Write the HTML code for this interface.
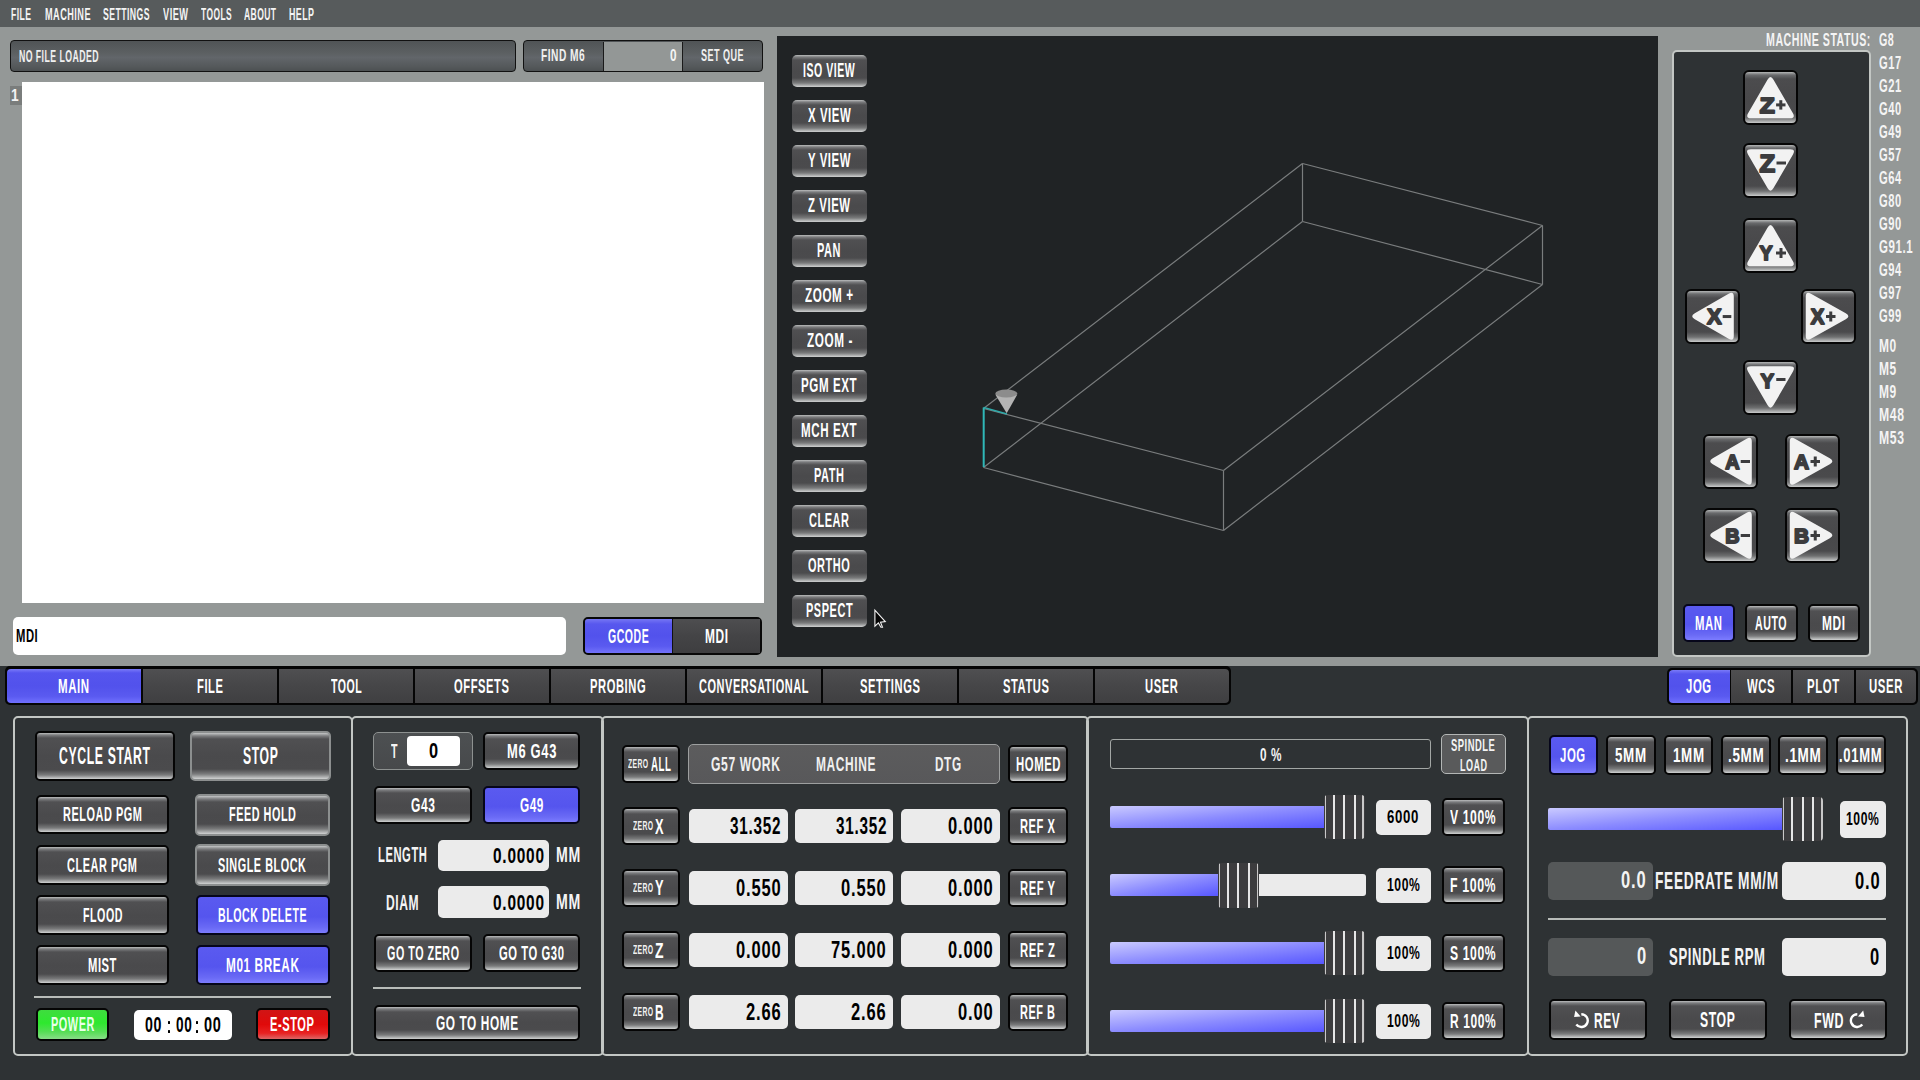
<!DOCTYPE html><html><head><meta charset="utf-8"><title>Probe Basic</title><style>
*{margin:0;padding:0;box-sizing:border-box}
html,body{width:1920px;height:1080px;overflow:hidden;background:#949897;font-family:"Liberation Sans",sans-serif;font-weight:bold;}
div{position:absolute}
.tw{display:inline-block;position:relative;line-height:1;font-size:0;white-space:nowrap;vertical-align:top}
.t{display:inline-block;line-height:1;white-space:nowrap;color:#fff;transform-origin:0 0}
.tx{line-height:0;white-space:nowrap}
.b,.bg,.bb,.gr,.rd,.tab,.tabb{display:flex;align-items:center;justify-content:center;border-radius:5px;}
.b{border:2px solid #050505;background:linear-gradient(#bcbebe 0,#7c7d7f 2px,#505052 5px,#4a4a4c 50%,#4b4b4d calc(100% - 9px),#7a7b7c calc(100% - 4px),#d0d2d2 100%);}
.bg{border:2px solid #8c8f8f;background:linear-gradient(#c4c6c6 0,#7c7d7f 3px,#505052 6px,#4a4a4c 50%,#4b4b4d calc(100% - 10px),#7a7b7c calc(100% - 5px),#d0d2d2 100%);}
.bb{border:2px solid #06061a;background:linear-gradient(#5a5af0 0,#5555ee 55%,#6a6af5 85%,#7c7cff 100%);}
.gr{border:2px solid #050505;background:linear-gradient(#3fdc3f 0,#2ee82e 45%,#55dd55 75%,#88dd88 100%);}
.rd{border:2px solid #050505;background:linear-gradient(#d01515 0,#e00a0a 50%,#e82222 80%,#dd6666 100%);}
.pn{border:2px solid #c3c7c4;border-radius:5px;}
.inp{background:#ebebeb;border-radius:5px;display:flex;align-items:center;justify-content:flex-end;padding-top:1.5px;}
.inp .t{color:#000}
.jb{border:2px solid #050505;border-radius:6px;background:linear-gradient(#b4b6b6 0,#6a6b6d 3px,#4c4c4e 7px,#48484a 55%,#4a4a4c calc(100% - 10px),#6f7071 calc(100% - 5px),#c9cbcb 100%);}
</style></head><body>
<div class="" style="left:0px;top:0px;width:1920px;height:27px;background:#575b5c;"></div>
<div class="tx" style="left:10.5px;top:5.65px;"><span class="tw" style="width:20.5px;height:16.35px"><span class="t" style="font-size:16.35px;transform:scaleX(0.5298);letter-spacing:0.82px;color:#f4f4f4;">FILE</span></span></div>
<div class="tx" style="left:44.5px;top:5.65px;"><span class="tw" style="width:46px;height:16.35px"><span class="t" style="font-size:16.35px;transform:scaleX(0.5608);letter-spacing:0.82px;color:#f4f4f4;">MACHINE</span></span></div>
<div class="tx" style="left:103px;top:5.65px;"><span class="tw" style="width:47px;height:16.35px"><span class="t" style="font-size:16.35px;transform:scaleX(0.5322);letter-spacing:0.82px;color:#f4f4f4;">SETTINGS</span></span></div>
<div class="tx" style="left:162.5px;top:5.65px;"><span class="tw" style="width:25.5px;height:16.35px"><span class="t" style="font-size:16.35px;transform:scaleX(0.5659);letter-spacing:0.82px;color:#f4f4f4;">VIEW</span></span></div>
<div class="tx" style="left:201px;top:5.65px;"><span class="tw" style="width:31px;height:16.35px"><span class="t" style="font-size:16.35px;transform:scaleX(0.5157);letter-spacing:0.82px;color:#f4f4f4;">TOOLS</span></span></div>
<div class="tx" style="left:244px;top:5.65px;"><span class="tw" style="width:32.5px;height:16.35px"><span class="t" style="font-size:16.35px;transform:scaleX(0.5223);letter-spacing:0.82px;color:#f4f4f4;">ABOUT</span></span></div>
<div class="tx" style="left:289px;top:5.65px;"><span class="tw" style="width:25.5px;height:16.35px"><span class="t" style="font-size:16.35px;transform:scaleX(0.5439);letter-spacing:0.82px;color:#f4f4f4;">HELP</span></span></div>
<div class="" style="left:10px;top:40px;width:506px;height:32px;border:1.5px solid #111;border-radius:4px;background:linear-gradient(#505456 0,#5c6062 40%,#62666a 55%,#55595b 85%,#4c5052 100%);"></div>
<div class="tx" style="left:19.4px;top:48.04px;"><span class="tw" style="width:80px;height:16.13px"><span class="t" style="font-size:16.13px;transform:scaleX(0.5423);letter-spacing:0.81px;color:#f0f0f0;">NO FILE LOADED</span></span></div>
<div class="" style="left:523px;top:40px;width:240px;height:32px;border:1.5px solid #111;border-radius:4px;background:linear-gradient(#505456 0,#5c6062 40%,#62666a 55%,#55595b 85%,#4c5052 100%);overflow:hidden;"></div>
<div class="" style="left:602.5px;top:41.5px;width:80.5px;height:29px;background:#939796;border-left:1.5px solid #1a1a1a;border-right:1.5px solid #1a1a1a;"></div>
<div class="tx" style="left:62.9px;top:48.37px;width:1000px;text-align:center;"><span class="tw" style="width:44.25px;height:16.57px"><span class="t" style="font-size:16.57px;transform:scaleX(0.6139);letter-spacing:0.83px;color:#f0f0f0;">FIND M6</span></span></div>
<div class="tx" style="left:222.6px;top:48.37px;width:1000px;text-align:center;"><span class="tw" style="width:43px;height:16.57px"><span class="t" style="font-size:16.57px;transform:scaleX(0.5475);letter-spacing:0.83px;color:#f0f0f0;">SET QUE</span></span></div>
<div class="tx" style="left:-323.25px;top:47.77px;width:1000px;text-align:right;"><span class="tw" style="width:7.13px;height:16.57px"><span class="t" style="font-size:16.57px;transform:scaleX(0.7100);letter-spacing:0.83px;color:#f4f4f4;">0</span></span></div>
<div class="" style="left:22px;top:82px;width:742px;height:521px;background:#ffffff;"></div>
<div class="" style="left:10px;top:86px;width:12px;height:18.5px;background:#7a7d7c;"></div>
<div class="tx" style="left:-485.2px;top:86.58px;width:1000px;text-align:center;"><span class="tw" style="width:8.32px;height:17.15px"><span class="t" style="font-size:17.15px;transform:scaleX(0.8000);letter-spacing:0.86px;color:#f4f4f4;">1</span></span></div>
<div class="" style="left:13px;top:617px;width:553px;height:38px;background:#fff;border-radius:5px;"></div>
<div class="tx" style="left:16.25px;top:627px;"><span class="tw" style="width:22.32px;height:18.9px"><span class="t" style="font-size:18.9px;transform:scaleX(0.5956);letter-spacing:0.94px;color:#000;">MDI</span></span></div>
<div class="" style="left:582.5px;top:616.8px;width:179.5px;height:38.2px;border:2px solid #080808;border-radius:5px;background:#454547;overflow:hidden;"></div>
<div class="" style="left:584.5px;top:618.8px;width:87.25px;height:34.2px;display:flex;align-items:center;justify-content:center;border-radius:3px 0 0 3px;background:linear-gradient(#7676f4 0,#5858ee 5px,#5252ec 50%,#5a5af0 80%,#7272fa 100%);"><span class="tw" style="width:41.25px;height:19.99px"><span class="t" style="font-size:19.99px;transform:scaleX(0.5269);letter-spacing:1px;">GCODE</span></span></div>
<div class="" style="left:671.75px;top:618.8px;width:88.25px;height:34.2px;display:flex;align-items:center;justify-content:center;border-left:1.5px solid #111;background:linear-gradient(#4e4e50,#444446 50%,#3e3e40);"><span class="tw" style="width:23.61px;height:19.99px"><span class="t" style="font-size:19.99px;transform:scaleX(0.5956);letter-spacing:1px;">MDI</span></span></div>
<div class="" style="left:777px;top:36px;width:881px;height:621px;background:#202325;"></div>
<div class="b" style="left:792px;top:54.5px;width:75px;height:32px;border:none;border-radius:5px;"><span class="tw" style="width:52.3px;height:19.62px"><span class="t" style="font-size:19.62px;transform:scaleX(0.5378);letter-spacing:0.98px;">ISO VIEW</span></span></div>
<div class="b" style="left:792px;top:99.5px;width:75px;height:32px;border:none;border-radius:5px;"><span class="tw" style="width:43.31px;height:19.62px"><span class="t" style="font-size:19.62px;transform:scaleX(0.5807);letter-spacing:0.98px;">X VIEW</span></span></div>
<div class="b" style="left:792px;top:144.5px;width:75px;height:32px;border:none;border-radius:5px;"><span class="tw" style="width:43.1px;height:19.62px"><span class="t" style="font-size:19.62px;transform:scaleX(0.5807);letter-spacing:0.98px;">Y VIEW</span></span></div>
<div class="b" style="left:792px;top:189.5px;width:75px;height:32px;border:none;border-radius:5px;"><span class="tw" style="width:42.69px;height:19.62px"><span class="t" style="font-size:19.62px;transform:scaleX(0.5810);letter-spacing:0.98px;">Z VIEW</span></span></div>
<div class="b" style="left:792px;top:234.5px;width:75px;height:32px;border:none;border-radius:5px;"><span class="tw" style="width:24.03px;height:19.62px"><span class="t" style="font-size:19.62px;transform:scaleX(0.5600);letter-spacing:0.98px;">PAN</span></span></div>
<div class="b" style="left:792px;top:279.5px;width:75px;height:32px;border:none;border-radius:5px;"><span class="tw" style="width:48.66px;height:19.62px"><span class="t" style="font-size:19.62px;transform:scaleX(0.5959);letter-spacing:0.98px;">ZOOM +</span></span></div>
<div class="b" style="left:792px;top:324.5px;width:75px;height:32px;border:none;border-radius:5px;"><span class="tw" style="width:45.9px;height:19.62px"><span class="t" style="font-size:19.62px;transform:scaleX(0.5982);letter-spacing:0.98px;">ZOOM -</span></span></div>
<div class="b" style="left:792px;top:369.5px;width:75px;height:32px;border:none;border-radius:5px;"><span class="tw" style="width:56.23px;height:19.62px"><span class="t" style="font-size:19.62px;transform:scaleX(0.5908);letter-spacing:0.98px;">PGM EXT</span></span></div>
<div class="b" style="left:792px;top:414.5px;width:75px;height:32px;border:none;border-radius:5px;"><span class="tw" style="width:56.22px;height:19.62px"><span class="t" style="font-size:19.62px;transform:scaleX(0.5908);letter-spacing:0.98px;">MCH EXT</span></span></div>
<div class="b" style="left:792px;top:459.5px;width:75px;height:32px;border:none;border-radius:5px;"><span class="tw" style="width:30.48px;height:19.62px"><span class="t" style="font-size:19.62px;transform:scaleX(0.5600);letter-spacing:0.98px;">PATH</span></span></div>
<div class="b" style="left:792px;top:504.5px;width:75px;height:32px;border:none;border-radius:5px;"><span class="tw" style="width:40.59px;height:19.62px"><span class="t" style="font-size:19.62px;transform:scaleX(0.5600);letter-spacing:0.98px;">CLEAR</span></span></div>
<div class="b" style="left:792px;top:549.5px;width:75px;height:32px;border:none;border-radius:5px;"><span class="tw" style="width:42.42px;height:19.62px"><span class="t" style="font-size:19.62px;transform:scaleX(0.5600);letter-spacing:0.98px;">ORTHO</span></span></div>
<div class="b" style="left:792px;top:594.5px;width:75px;height:32px;border:none;border-radius:5px;"><span class="tw" style="width:47.26px;height:19.62px"><span class="t" style="font-size:19.62px;transform:scaleX(0.5600);letter-spacing:0.98px;">PSPECT</span></span></div>
<svg width="1920" height="1080" style="position:absolute;left:0;top:0"><line x1="1302.5" y1="163.5" x2="983.5" y2="408.5" stroke="#7a7d7e" stroke-width="1.2"/><line x1="1302.5" y1="163.5" x2="1542.5" y2="225.5" stroke="#7a7d7e" stroke-width="1.2"/><line x1="1302.5" y1="163.5" x2="1302.5" y2="221.5" stroke="#7a7d7e" stroke-width="1.2"/><line x1="1302.5" y1="221.5" x2="983.5" y2="467.5" stroke="#7a7d7e" stroke-width="1.2"/><line x1="1302.5" y1="221.5" x2="1542.5" y2="284.5" stroke="#7a7d7e" stroke-width="1.2"/><line x1="1542.5" y1="225.5" x2="1542.5" y2="284.5" stroke="#7a7d7e" stroke-width="1.2"/><line x1="1542.5" y1="225.5" x2="1223.5" y2="470.5" stroke="#7a7d7e" stroke-width="1.2"/><line x1="1542.5" y1="284.5" x2="1223.5" y2="530.5" stroke="#7a7d7e" stroke-width="1.2"/><line x1="983.5" y1="408.5" x2="1223.5" y2="470.5" stroke="#7a7d7e" stroke-width="1.2"/><line x1="983.5" y1="467.5" x2="1223.5" y2="530.5" stroke="#7a7d7e" stroke-width="1.2"/><line x1="1223.5" y1="470.5" x2="1223.5" y2="530.5" stroke="#7a7d7e" stroke-width="1.2"/><line x1="983.7" y1="407.5" x2="983.7" y2="467" stroke="#2fb7b7" stroke-width="2"/><line x1="983.7" y1="407.5" x2="1007" y2="414" stroke="#2fa9a9" stroke-width="1.5"/><path d="M995.3 394.4 L1006.7 413.3 L1017.3 394.4 Z" fill="#b4b4b4"/><ellipse cx="1006.3" cy="393.5" rx="11" ry="4" fill="#8c8c8c"/><path d="M874.9 610.2 L874.9 626.2 L878.4 622.9 L880.9 627.2 L882.5 627.2 L880.5 622.2 L885.3 621.6 Z" fill="#050505" stroke="#f4f4f4" stroke-width="1.1" stroke-linejoin="miter"/></svg>
<div class="tx" style="left:871px;top:31px;width:1000px;text-align:right;"><span class="tw" style="width:105px;height:18.9px"><span class="t" style="font-size:18.9px;transform:scaleX(0.5625);letter-spacing:0.94px;color:#f4f4f4;">MACHINE STATUS:</span></span></div>
<div class="tx" style="left:1878.75px;top:31px;"><span class="tw" style="width:15.37px;height:18.9px"><span class="t" style="font-size:18.9px;transform:scaleX(0.5673);letter-spacing:0.94px;color:#f4f4f4;">G8</span></span></div>
<div class="tx" style="left:1878.75px;top:54px;"><span class="tw" style="width:22.77px;height:18.9px"><span class="t" style="font-size:18.9px;transform:scaleX(0.5907);letter-spacing:0.94px;color:#f4f4f4;">G17</span></span></div>
<div class="tx" style="left:1878.75px;top:77px;"><span class="tw" style="width:22.77px;height:18.9px"><span class="t" style="font-size:18.9px;transform:scaleX(0.5907);letter-spacing:0.94px;color:#f4f4f4;">G21</span></span></div>
<div class="tx" style="left:1878.75px;top:100px;"><span class="tw" style="width:22.77px;height:18.9px"><span class="t" style="font-size:18.9px;transform:scaleX(0.5907);letter-spacing:0.94px;color:#f4f4f4;">G40</span></span></div>
<div class="tx" style="left:1878.75px;top:123px;"><span class="tw" style="width:22.77px;height:18.9px"><span class="t" style="font-size:18.9px;transform:scaleX(0.5907);letter-spacing:0.94px;color:#f4f4f4;">G49</span></span></div>
<div class="tx" style="left:1878.75px;top:146px;"><span class="tw" style="width:22.77px;height:18.9px"><span class="t" style="font-size:18.9px;transform:scaleX(0.5907);letter-spacing:0.94px;color:#f4f4f4;">G57</span></span></div>
<div class="tx" style="left:1878.75px;top:169px;"><span class="tw" style="width:22.77px;height:18.9px"><span class="t" style="font-size:18.9px;transform:scaleX(0.5907);letter-spacing:0.94px;color:#f4f4f4;">G64</span></span></div>
<div class="tx" style="left:1878.75px;top:192px;"><span class="tw" style="width:22.77px;height:18.9px"><span class="t" style="font-size:18.9px;transform:scaleX(0.5907);letter-spacing:0.94px;color:#f4f4f4;">G80</span></span></div>
<div class="tx" style="left:1878.75px;top:215px;"><span class="tw" style="width:22.77px;height:18.9px"><span class="t" style="font-size:18.9px;transform:scaleX(0.5907);letter-spacing:0.94px;color:#f4f4f4;">G90</span></span></div>
<div class="tx" style="left:1878.75px;top:238px;"><span class="tw" style="width:34.17px;height:18.9px"><span class="t" style="font-size:18.9px;transform:scaleX(0.6081);letter-spacing:0.94px;color:#f4f4f4;">G91.1</span></span></div>
<div class="tx" style="left:1878.75px;top:261px;"><span class="tw" style="width:22.77px;height:18.9px"><span class="t" style="font-size:18.9px;transform:scaleX(0.5907);letter-spacing:0.94px;color:#f4f4f4;">G94</span></span></div>
<div class="tx" style="left:1878.75px;top:284px;"><span class="tw" style="width:22.77px;height:18.9px"><span class="t" style="font-size:18.9px;transform:scaleX(0.5907);letter-spacing:0.94px;color:#f4f4f4;">G97</span></span></div>
<div class="tx" style="left:1878.75px;top:307px;"><span class="tw" style="width:22.77px;height:18.9px"><span class="t" style="font-size:18.9px;transform:scaleX(0.5907);letter-spacing:0.94px;color:#f4f4f4;">G99</span></span></div>
<div class="tx" style="left:1878.75px;top:336.5px;"><span class="tw" style="width:17.87px;height:18.9px"><span class="t" style="font-size:18.9px;transform:scaleX(0.6351);letter-spacing:0.94px;color:#f4f4f4;">M0</span></span></div>
<div class="tx" style="left:1878.75px;top:359.5px;"><span class="tw" style="width:17.87px;height:18.9px"><span class="t" style="font-size:18.9px;transform:scaleX(0.6351);letter-spacing:0.94px;color:#f4f4f4;">M5</span></span></div>
<div class="tx" style="left:1878.75px;top:382.5px;"><span class="tw" style="width:17.87px;height:18.9px"><span class="t" style="font-size:18.9px;transform:scaleX(0.6351);letter-spacing:0.94px;color:#f4f4f4;">M9</span></span></div>
<div class="tx" style="left:1878.75px;top:405.5px;"><span class="tw" style="width:25.6px;height:18.9px"><span class="t" style="font-size:18.9px;transform:scaleX(0.6465);letter-spacing:0.94px;color:#f4f4f4;">M48</span></span></div>
<div class="tx" style="left:1878.75px;top:428.5px;"><span class="tw" style="width:25.6px;height:18.9px"><span class="t" style="font-size:18.9px;transform:scaleX(0.6465);letter-spacing:0.94px;color:#f4f4f4;">M53</span></span></div>
<div class="pn" style="left:1671.6px;top:49.6px;width:199.9px;height:607.4px;background:#2e3234;"></div>
<div class="jb" style="left:1743.25px;top:69.5px;width:55px;height:55px;"><svg width="51" height="51" viewBox="0 0 51 51" style="position:absolute;left:0;top:0"><path d="M22.49 7.69 Q25.50 2.50 28.51 7.69 L47.79 41.01 Q50.80 46.20 44.80 46.20 L6.20 46.20 Q0.20 46.20 3.21 41.01 Z" fill="#f2f2f2"/><text x="14.85" y="40.55" font-family="Liberation Sans" font-weight="bold" font-size="22.24" fill="#3c3c3e" stroke="#3c3c3e" stroke-width="1.90" stroke-linejoin="round" textLength="15.00" lengthAdjust="spacingAndGlyphs">Z</text><rect x="31.10" y="31.40" width="9.40" height="3.00" fill="#3c3c3e"/><rect x="34.30" y="28.20" width="3.00" height="9.40" fill="#3c3c3e"/></svg></div>
<div class="jb" style="left:1743.25px;top:143.25px;width:55px;height:55px;"><svg width="51" height="51" viewBox="0 0 51 51" style="position:absolute;left:0;top:0"><path d="M22.49 43.11 Q25.50 48.30 28.51 43.11 L47.99 9.44 Q51.00 4.25 45.00 4.25 L6.00 4.25 Q0.00 4.25 3.01 9.44 Z" fill="#f2f2f2"/><text x="14.45" y="26.80" font-family="Liberation Sans" font-weight="bold" font-size="23.40" fill="#3c3c3e" stroke="#3c3c3e" stroke-width="1.90" stroke-linejoin="round" textLength="15.60" lengthAdjust="spacingAndGlyphs">Z</text><rect x="31.50" y="16.50" width="9.50" height="3.00" fill="#3c3c3e"/></svg></div>
<div class="jb" style="left:1743.25px;top:217.5px;width:55px;height:55px;"><svg width="51" height="51" viewBox="0 0 51 51" style="position:absolute;left:0;top:0"><path d="M22.49 7.69 Q25.50 2.50 28.51 7.69 L47.79 41.01 Q50.80 46.20 44.80 46.20 L6.20 46.20 Q0.20 46.20 3.21 41.01 Z" fill="#f2f2f2"/><text x="14.45" y="39.55" font-family="Liberation Sans" font-weight="bold" font-size="20.86" fill="#3c3c3e" stroke="#3c3c3e" stroke-width="1.90" stroke-linejoin="round" textLength="13.10" lengthAdjust="spacingAndGlyphs">Y</text><rect x="31.00" y="31.50" width="10.00" height="3.00" fill="#3c3c3e"/><rect x="34.50" y="28.00" width="3.00" height="10.00" fill="#3c3c3e"/></svg></div>
<div class="jb" style="left:1684.5px;top:288.75px;width:55px;height:55px;"><svg width="51" height="51" viewBox="0 0 51 51" style="position:absolute;left:0;top:0"><path d="M7.80 28.30 Q2.60 25.30 7.80 22.30 L41.60 2.80 Q46.80 -0.20 46.80 5.80 L46.80 44.80 Q46.80 50.80 41.60 47.80 Z" fill="#f2f2f2"/><text x="19.95" y="33.35" font-family="Liberation Sans" font-weight="bold" font-size="22.82" fill="#3c3c3e" stroke="#3c3c3e" stroke-width="1.90" stroke-linejoin="round" textLength="14.60" lengthAdjust="spacingAndGlyphs">X</text><rect x="35.70" y="24.05" width="8.60" height="3.00" fill="#3c3c3e"/></svg></div>
<div class="jb" style="left:1800.75px;top:288.75px;width:55px;height:55px;"><svg width="51" height="51" viewBox="0 0 51 51" style="position:absolute;left:0;top:0"><path d="M42.77 28.25 Q48.00 25.30 42.77 22.35 L7.98 2.75 Q2.75 -0.20 2.75 5.80 L2.75 44.80 Q2.75 50.80 7.98 47.85 Z" fill="#f2f2f2"/><text x="7.70" y="32.80" font-family="Liberation Sans" font-weight="bold" font-size="21.95" fill="#3c3c3e" stroke="#3c3c3e" stroke-width="1.90" stroke-linejoin="round" textLength="13.60" lengthAdjust="spacingAndGlyphs">X</text><rect x="23.00" y="24.00" width="9.50" height="3.00" fill="#3c3c3e"/><rect x="26.25" y="20.50" width="3.00" height="10.00" fill="#3c3c3e"/></svg></div>
<div class="jb" style="left:1743px;top:360px;width:55px;height:55px;"><svg width="51" height="51" viewBox="0 0 51 51" style="position:absolute;left:0;top:0"><path d="M22.49 43.11 Q25.50 48.30 28.51 43.11 L47.99 9.44 Q51.00 4.25 45.00 4.25 L6.00 4.25 Q0.00 4.25 3.01 9.44 Z" fill="#f2f2f2"/><text x="15.45" y="25.80" font-family="Liberation Sans" font-weight="bold" font-size="20.86" fill="#3c3c3e" stroke="#3c3c3e" stroke-width="1.90" stroke-linejoin="round" textLength="13.60" lengthAdjust="spacingAndGlyphs">Y</text><rect x="31.25" y="16.00" width="9.25" height="3.00" fill="#3c3c3e"/></svg></div>
<div class="jb" style="left:1702.5px;top:433.75px;width:55px;height:55px;"><svg width="51" height="51" viewBox="0 0 51 51" style="position:absolute;left:0;top:0"><path d="M7.80 28.30 Q2.60 25.30 7.80 22.30 L41.60 2.80 Q46.80 -0.20 46.80 5.80 L46.80 44.80 Q46.80 50.80 41.60 47.80 Z" fill="#f2f2f2"/><text x="20.20" y="33.30" font-family="Liberation Sans" font-weight="bold" font-size="20.86" fill="#3c3c3e" stroke="#3c3c3e" stroke-width="1.90" stroke-linejoin="round" textLength="14.35" lengthAdjust="spacingAndGlyphs">A</text><rect x="35.70" y="24.00" width="9.30" height="3.00" fill="#3c3c3e"/></svg></div>
<div class="jb" style="left:1785px;top:433.75px;width:55px;height:55px;"><svg width="51" height="51" viewBox="0 0 51 51" style="position:absolute;left:0;top:0"><path d="M42.77 28.25 Q48.00 25.30 42.77 22.35 L7.98 2.75 Q2.75 -0.20 2.75 5.80 L2.75 44.80 Q2.75 50.80 7.98 47.85 Z" fill="#f2f2f2"/><text x="6.95" y="33.30" font-family="Liberation Sans" font-weight="bold" font-size="20.86" fill="#3c3c3e" stroke="#3c3c3e" stroke-width="1.90" stroke-linejoin="round" textLength="15.10" lengthAdjust="spacingAndGlyphs">A</text><rect x="23.50" y="24.00" width="9.50" height="3.00" fill="#3c3c3e"/><rect x="26.75" y="20.50" width="3.00" height="10.00" fill="#3c3c3e"/></svg></div>
<div class="jb" style="left:1702.5px;top:507.5px;width:55px;height:55px;"><svg width="51" height="51" viewBox="0 0 51 51" style="position:absolute;left:0;top:0"><path d="M7.80 28.30 Q2.60 25.30 7.80 22.30 L41.60 2.80 Q46.80 -0.20 46.80 5.80 L46.80 44.80 Q46.80 50.80 41.60 47.80 Z" fill="#f2f2f2"/><text x="20.20" y="33.30" font-family="Liberation Sans" font-weight="bold" font-size="20.86" fill="#3c3c3e" stroke="#3c3c3e" stroke-width="1.90" stroke-linejoin="round" textLength="14.35" lengthAdjust="spacingAndGlyphs">B</text><rect x="35.70" y="24.00" width="9.30" height="3.00" fill="#3c3c3e"/></svg></div>
<div class="jb" style="left:1785px;top:507.5px;width:55px;height:55px;"><svg width="51" height="51" viewBox="0 0 51 51" style="position:absolute;left:0;top:0"><path d="M42.77 28.25 Q48.00 25.30 42.77 22.35 L7.98 2.75 Q2.75 -0.20 2.75 5.80 L2.75 44.80 Q2.75 50.80 7.98 47.85 Z" fill="#f2f2f2"/><text x="6.95" y="33.30" font-family="Liberation Sans" font-weight="bold" font-size="20.86" fill="#3c3c3e" stroke="#3c3c3e" stroke-width="1.90" stroke-linejoin="round" textLength="15.10" lengthAdjust="spacingAndGlyphs">B</text><rect x="23.50" y="24.00" width="9.50" height="3.00" fill="#3c3c3e"/><rect x="26.75" y="20.50" width="3.00" height="10.00" fill="#3c3c3e"/></svg></div>
<div class="bb" style="left:1682.5px;top:603.75px;width:52.5px;height:38.25px;"><span class="tw" style="width:27.5px;height:19.99px"><span class="t" style="font-size:19.99px;transform:scaleX(0.5669);letter-spacing:1px;">MAN</span></span></div>
<div class="b" style="left:1744.5px;top:603.75px;width:53.75px;height:38.25px;"><span class="tw" style="width:32px;height:19.99px"><span class="t" style="font-size:19.99px;transform:scaleX(0.5311);letter-spacing:1px;">AUTO</span></span></div>
<div class="b" style="left:1807.5px;top:603.75px;width:52.5px;height:38.25px;"><span class="tw" style="width:23.61px;height:19.99px"><span class="t" style="font-size:19.99px;transform:scaleX(0.5956);letter-spacing:1px;">MDI</span></span></div>
<div class="" style="left:0px;top:666px;width:1920px;height:414px;background:#2e3234;"></div>
<div class="" style="left:4.5px;top:666.4px;width:1226.5px;height:38.4px;background:#050505;border-radius:5px;"></div>
<div class="" style="left:7px;top:668.7px;width:134.4px;height:34.3px;display:flex;align-items:center;justify-content:center;border-radius:4px 0 0 4px;background:linear-gradient(#7a7af8 0,#5555ee 4px,#5252ec 50%,#5a5af0 80%,#7070ff 100%);"><span class="tw" style="width:31.7px;height:19.99px"><span class="t" style="font-size:19.99px;transform:scaleX(0.5757);letter-spacing:1px;">MAIN</span></span></div>
<div class="" style="left:143.4px;top:668.7px;width:133.9px;height:34.3px;display:flex;align-items:center;justify-content:center;background:linear-gradient(#4f4f51,#464648 50%,#3f3f41);"><span class="tw" style="width:26.49px;height:19.99px"><span class="t" style="font-size:19.99px;transform:scaleX(0.5600);letter-spacing:1px;">FILE</span></span></div>
<div class="" style="left:279.3px;top:668.7px;width:133.9px;height:34.3px;display:flex;align-items:center;justify-content:center;background:linear-gradient(#4f4f51,#464648 50%,#3f3f41);"><span class="tw" style="width:31.25px;height:19.99px"><span class="t" style="font-size:19.99px;transform:scaleX(0.5284);letter-spacing:1px;">TOOL</span></span></div>
<div class="" style="left:415.2px;top:668.7px;width:133.9px;height:34.3px;display:flex;align-items:center;justify-content:center;background:linear-gradient(#4f4f51,#464648 50%,#3f3f41);"><span class="tw" style="width:55.53px;height:19.99px"><span class="t" style="font-size:19.99px;transform:scaleX(0.5600);letter-spacing:1px;">OFFSETS</span></span></div>
<div class="" style="left:551.1px;top:668.7px;width:133.9px;height:34.3px;display:flex;align-items:center;justify-content:center;background:linear-gradient(#4f4f51,#464648 50%,#3f3f41);"><span class="tw" style="width:56.15px;height:19.99px"><span class="t" style="font-size:19.99px;transform:scaleX(0.5600);letter-spacing:1px;">PROBING</span></span></div>
<div class="" style="left:687px;top:668.7px;width:133.9px;height:34.3px;display:flex;align-items:center;justify-content:center;background:linear-gradient(#4f4f51,#464648 50%,#3f3f41);"><span class="tw" style="width:110px;height:19.99px"><span class="t" style="font-size:19.99px;transform:scaleX(0.5496);letter-spacing:1px;">CONVERSATIONAL</span></span></div>
<div class="" style="left:822.9px;top:668.7px;width:133.9px;height:34.3px;display:flex;align-items:center;justify-content:center;background:linear-gradient(#4f4f51,#464648 50%,#3f3f41);"><span class="tw" style="width:60.44px;height:19.99px"><span class="t" style="font-size:19.99px;transform:scaleX(0.5600);letter-spacing:1px;">SETTINGS</span></span></div>
<div class="" style="left:958.8px;top:668.7px;width:133.9px;height:34.3px;display:flex;align-items:center;justify-content:center;background:linear-gradient(#4f4f51,#464648 50%,#3f3f41);"><span class="tw" style="width:46.46px;height:19.99px"><span class="t" style="font-size:19.99px;transform:scaleX(0.5600);letter-spacing:1px;">STATUS</span></span></div>
<div class="" style="left:1094.7px;top:668.7px;width:134.3px;height:34.3px;display:flex;align-items:center;justify-content:center;border-radius:0 4px 4px 0;background:linear-gradient(#4f4f51,#464648 50%,#3f3f41);"><span class="tw" style="width:33.33px;height:19.99px"><span class="t" style="font-size:19.99px;transform:scaleX(0.5600);letter-spacing:1px;">USER</span></span></div>
<div class="" style="left:1666.5px;top:667.5px;width:251px;height:37.5px;background:#050505;border-radius:5px;"></div>
<div class="" style="left:1668.5px;top:669.5px;width:61px;height:33.5px;display:flex;align-items:center;justify-content:center;border-radius:4px 0 0 4px;background:linear-gradient(#7a7af8 0,#5555ee 4px,#5252ec 50%,#5a5af0 80%,#7070ff 100%);"><span class="tw" style="width:25.77px;height:20.35px"><span class="t" style="font-size:20.35px;transform:scaleX(0.5600);letter-spacing:1.02px;">JOG</span></span></div>
<div class="" style="left:1731px;top:669.5px;width:60.25px;height:33.5px;display:flex;align-items:center;justify-content:center;background:linear-gradient(#4f4f51,#464648 50%,#3f3f41);"><span class="tw" style="width:28.29px;height:20.35px"><span class="t" style="font-size:20.35px;transform:scaleX(0.5600);letter-spacing:1.02px;">WCS</span></span></div>
<div class="" style="left:1792.5px;top:669.5px;width:61.75px;height:33.5px;display:flex;align-items:center;justify-content:center;background:linear-gradient(#4f4f51,#464648 50%,#3f3f41);"><span class="tw" style="width:32.66px;height:20.35px"><span class="t" style="font-size:20.35px;transform:scaleX(0.5600);letter-spacing:1.02px;">PLOT</span></span></div>
<div class="" style="left:1855.5px;top:669.5px;width:60px;height:33.5px;display:flex;align-items:center;justify-content:center;border-radius:0 4px 4px 0;background:linear-gradient(#4f4f51,#464648 50%,#3f3f41);"><span class="tw" style="width:33.94px;height:20.35px"><span class="t" style="font-size:20.35px;transform:scaleX(0.5600);letter-spacing:1.02px;">USER</span></span></div>
<div class="pn" style="left:12.5px;top:716px;width:340.5px;height:340px;"></div>
<div class="pn" style="left:351px;top:716px;width:252.8px;height:340px;"></div>
<div class="pn" style="left:601.2px;top:716px;width:487.5px;height:340px;"></div>
<div class="pn" style="left:1086.1px;top:716px;width:442.9px;height:340px;"></div>
<div class="pn" style="left:1527px;top:716px;width:380.5px;height:340px;"></div>
<div class="b" style="left:35px;top:731.25px;width:139.5px;height:49.25px;"><span class="tw" style="width:91.7px;height:24.27px"><span class="t" style="font-size:24.27px;transform:scaleX(0.5053);letter-spacing:1.21px;">CYCLE START</span></span></div>
<div class="bg" style="left:190px;top:731.25px;width:141.25px;height:49.25px;"><span class="tw" style="width:35.4px;height:24.27px"><span class="t" style="font-size:24.27px;transform:scaleX(0.5021);letter-spacing:1.21px;">STOP</span></span></div>
<div class="b" style="left:36.25px;top:795px;width:132.5px;height:39.25px;"><span class="tw" style="width:79.5px;height:20.35px"><span class="t" style="font-size:20.35px;transform:scaleX(0.5368);letter-spacing:1.02px;">RELOAD PGM</span></span></div>
<div class="bg" style="left:195px;top:793.75px;width:134.5px;height:41.75px;"><span class="tw" style="width:67.5px;height:20.35px"><span class="t" style="font-size:20.35px;transform:scaleX(0.5326);letter-spacing:1.02px;">FEED HOLD</span></span></div>
<div class="b" style="left:36.25px;top:845px;width:132.5px;height:40px;"><span class="tw" style="width:70.5px;height:20.35px"><span class="t" style="font-size:20.35px;transform:scaleX(0.5371);letter-spacing:1.02px;">CLEAR PGM</span></span></div>
<div class="bg" style="left:195px;top:843.75px;width:134.5px;height:42px;"><span class="tw" style="width:88.5px;height:20.35px"><span class="t" style="font-size:20.35px;transform:scaleX(0.5333);letter-spacing:1.02px;">SINGLE BLOCK</span></span></div>
<div class="b" style="left:36.25px;top:895px;width:132.5px;height:40px;"><span class="tw" style="width:40px;height:20.35px"><span class="t" style="font-size:20.35px;transform:scaleX(0.5243);letter-spacing:1.02px;">FLOOD</span></span></div>
<div class="bb" style="left:196.25px;top:895px;width:133.25px;height:40px;"><span class="tw" style="width:89.1px;height:20.35px"><span class="t" style="font-size:20.35px;transform:scaleX(0.5226);letter-spacing:1.02px;">BLOCK DELETE</span></span></div>
<div class="b" style="left:36.25px;top:945px;width:132.5px;height:40px;"><span class="tw" style="width:29px;height:20.35px"><span class="t" style="font-size:20.35px;transform:scaleX(0.5505);letter-spacing:1.02px;">MIST</span></span></div>
<div class="bb" style="left:196.25px;top:945px;width:133.25px;height:40px;"><span class="tw" style="width:73.5px;height:20.35px"><span class="t" style="font-size:20.35px;transform:scaleX(0.5799);letter-spacing:1.02px;">M01 BREAK</span></span></div>
<div class="" style="left:33.75px;top:996px;width:297.5px;height:2px;background:#b8bcb9;"></div>
<div class="gr" style="left:36.25px;top:1008px;width:72.5px;height:33.25px;"><span class="tw" style="width:44px;height:19.62px"><span class="t" style="font-size:19.62px;transform:scaleX(0.5567);letter-spacing:0.98px;color:#eaffea;">POWER</span></span></div>
<div class="" style="left:134px;top:1009.9px;width:97.7px;height:29.8px;background:#fff;border-radius:5px;"></div>
<div class="tx" style="left:144.6px;top:1013.36px;"><span class="tw" style="width:17.2px;height:22.97px"><span class="t" style="font-size:22.97px;transform:scaleX(0.6178);letter-spacing:1.15px;color:#000;">00</span></span></div>
<div class="tx" style="left:175.6px;top:1013.36px;"><span class="tw" style="width:16.5px;height:22.97px"><span class="t" style="font-size:22.97px;transform:scaleX(0.5927);letter-spacing:1.15px;color:#000;">00</span></span></div>
<div class="tx" style="left:203.5px;top:1013.36px;"><span class="tw" style="width:17.6px;height:22.97px"><span class="t" style="font-size:22.97px;transform:scaleX(0.6322);letter-spacing:1.15px;color:#000;">00</span></span></div>
<div class="" style="left:167.6px;top:1021.4px;width:2.6px;height:2.7px;background:#000;border-radius:0.5px;"></div>
<div class="" style="left:167.6px;top:1030.1px;width:2.6px;height:2.7px;background:#000;border-radius:0.5px;"></div>
<div class="" style="left:195.7px;top:1021.4px;width:2.6px;height:2.7px;background:#000;border-radius:0.5px;"></div>
<div class="" style="left:195.7px;top:1030.1px;width:2.6px;height:2.7px;background:#000;border-radius:0.5px;"></div>
<div class="rd" style="left:255.5px;top:1008px;width:74px;height:33.25px;"><span class="tw" style="width:44.5px;height:19.62px"><span class="t" style="font-size:19.62px;transform:scaleX(0.5663);letter-spacing:0.98px;">E-STOP</span></span></div>
<div class="" style="left:373px;top:732px;width:99.5px;height:38px;background:linear-gradient(#4d5052,#47494b);border:1.5px solid #8d9190;border-radius:5px;"></div>
<div class="tx" style="left:-105.5px;top:740.83px;width:1000px;text-align:center;"><span class="tw" style="width:7px;height:19.99px"><span class="t" style="font-size:19.99px;transform:scaleX(0.5300);letter-spacing:1px;color:#f4f4f4;">T</span></span></div>
<div class="" style="left:407px;top:735.75px;width:53px;height:30.5px;background:#fff;border-radius:4px;display:flex;align-items:center;justify-content:center;"><span class="tw" style="width:9.91px;height:21.8px"><span class="t" style="font-size:21.8px;transform:scaleX(0.7500);letter-spacing:1.09px;color:#000;">0</span></span></div>
<div class="b" style="left:483px;top:732px;width:97px;height:37.5px;"><span class="tw" style="width:50px;height:19.99px"><span class="t" style="font-size:19.99px;transform:scaleX(0.6486);letter-spacing:1px;">M6 G43</span></span></div>
<div class="b" style="left:374.25px;top:786.25px;width:97.5px;height:37.5px;"><span class="tw" style="width:24.5px;height:19.99px"><span class="t" style="font-size:19.99px;transform:scaleX(0.6009);letter-spacing:1px;">G43</span></span></div>
<div class="bb" style="left:483px;top:786.25px;width:97px;height:37.5px;"><span class="tw" style="width:24px;height:19.99px"><span class="t" style="font-size:19.99px;transform:scaleX(0.5886);letter-spacing:1px;">G49</span></span></div>
<div class="tx" style="left:-97.25px;top:843.92px;width:1000px;text-align:center;"><span class="tw" style="width:49.5px;height:22.53px"><span class="t" style="font-size:22.53px;transform:scaleX(0.4981);letter-spacing:1.13px;color:#f4f4f4;">LENGTH</span></span></div>
<div class="inp" style="left:438px;top:839.5px;width:111.25px;height:31.75px;padding-right:5px;"><span class="tw" style="width:51.75px;height:21.8px"><span class="t" style="font-size:21.8px;transform:scaleX(0.7067);letter-spacing:1.09px;color:#000;">0.0000</span></span></div>
<div class="tx" style="left:555.5px;top:843.92px;"><span class="tw" style="width:25px;height:22.53px"><span class="t" style="font-size:22.53px;transform:scaleX(0.6283);letter-spacing:1.13px;color:#f4f4f4;">MM</span></span></div>
<div class="tx" style="left:-97.1px;top:891.54px;width:1000px;text-align:center;"><span class="tw" style="width:33.25px;height:21.8px"><span class="t" style="font-size:21.8px;transform:scaleX(0.5535);letter-spacing:1.09px;color:#f4f4f4;">DIAM</span></span></div>
<div class="inp" style="left:438px;top:886.25px;width:111.25px;height:32px;padding-right:5px;"><span class="tw" style="width:51.75px;height:21.8px"><span class="t" style="font-size:21.8px;transform:scaleX(0.7067);letter-spacing:1.09px;color:#000;">0.0000</span></span></div>
<div class="tx" style="left:555.5px;top:891.42px;"><span class="tw" style="width:25px;height:22.53px"><span class="t" style="font-size:22.53px;transform:scaleX(0.6283);letter-spacing:1.13px;color:#f4f4f4;">MM</span></span></div>
<div class="b" style="left:374.25px;top:934.25px;width:97.5px;height:37.75px;"><span class="tw" style="width:72.5px;height:19.99px"><span class="t" style="font-size:19.99px;transform:scaleX(0.5367);letter-spacing:1px;">GO TO ZERO</span></span></div>
<div class="b" style="left:483px;top:934.25px;width:97px;height:37.75px;"><span class="tw" style="width:65.5px;height:19.99px"><span class="t" style="font-size:19.99px;transform:scaleX(0.5629);letter-spacing:1px;">GO TO G30</span></span></div>
<div class="" style="left:373px;top:987px;width:208.25px;height:2px;background:#b8bcb9;"></div>
<div class="b" style="left:374.25px;top:1004.5px;width:205.75px;height:36.75px;"><span class="tw" style="width:82.69px;height:19.99px"><span class="t" style="font-size:19.99px;transform:scaleX(0.5926);letter-spacing:1px;">GO TO HOME</span></span></div>
<div class="b" style="left:621.75px;top:745px;width:58.25px;height:37.5px;"></div>
<div class="tx" style="left:627.7px;top:757.82px;"><span class="tw" style="width:20.4px;height:12.5px"><span class="t" style="font-size:12.5px;transform:scaleX(0.5480);letter-spacing:0.62px;color:#f2f2f2;">ZERO</span></span></div>
<div class="tx" style="left:650.7px;top:755.13px;"><span class="tw" style="width:20.3px;height:19.33px"><span class="t" style="font-size:19.33px;transform:scaleX(0.5015);letter-spacing:0.97px;color:#fff;">ALL</span></span></div>
<div class="" style="left:688px;top:744.25px;width:311.5px;height:39.5px;background:linear-gradient(#5c5c5d,#58585a);border:1.2px solid #9d9f9f;border-radius:5px;"></div>
<div class="tx" style="left:246px;top:753.41px;width:1000px;text-align:center;"><span class="tw" style="width:69.5px;height:21.08px"><span class="t" style="font-size:21.08px;transform:scaleX(0.5751);letter-spacing:1.05px;color:#f0f0f0;">G57 WORK</span></span></div>
<div class="tx" style="left:346.25px;top:753.41px;width:1000px;text-align:center;"><span class="tw" style="width:60px;height:21.08px"><span class="t" style="font-size:21.08px;transform:scaleX(0.5675);letter-spacing:1.05px;color:#f0f0f0;">MACHINE</span></span></div>
<div class="tx" style="left:448.5px;top:753.41px;width:1000px;text-align:center;"><span class="tw" style="width:26.68px;height:21.08px"><span class="t" style="font-size:21.08px;transform:scaleX(0.5600);letter-spacing:1.05px;color:#f0f0f0;">DTG</span></span></div>
<div class="b" style="left:1008px;top:745px;width:60px;height:38px;"><span class="tw" style="width:45px;height:19.99px"><span class="t" style="font-size:19.99px;transform:scaleX(0.5669);letter-spacing:1px;">HOMED</span></span></div>
<div class="b" style="left:621.75px;top:807px;width:58.25px;height:38px;"></div>
<div class="tx" style="left:632.8px;top:819.79px;"><span class="tw" style="width:20.4px;height:12.65px"><span class="t" style="font-size:12.65px;transform:scaleX(0.5417);letter-spacing:0.63px;color:#f2f2f2;">ZERO</span></span></div>
<div class="tx" style="left:655.2px;top:814.56px;"><span class="tw" style="width:9.2px;height:22.97px"><span class="t" style="font-size:22.97px;transform:scaleX(0.5587);letter-spacing:1.15px;color:#fff;">X</span></span></div>
<div class="inp" style="left:688.75px;top:808.75px;width:98.75px;height:33.75px;padding-right:6.5px;"><span class="tw" style="width:51.25px;height:23.26px"><span class="t" style="font-size:23.26px;transform:scaleX(0.6561);letter-spacing:1.16px;color:#000;">31.352</span></span></div>
<div class="inp" style="left:794.5px;top:808.75px;width:98.75px;height:33.75px;padding-right:6.5px;"><span class="tw" style="width:51.25px;height:23.26px"><span class="t" style="font-size:23.26px;transform:scaleX(0.6561);letter-spacing:1.16px;color:#000;">31.352</span></span></div>
<div class="inp" style="left:900.75px;top:808.75px;width:98.75px;height:33.75px;padding-right:6.5px;"><span class="tw" style="width:45.45px;height:23.26px"><span class="t" style="font-size:23.26px;transform:scaleX(0.7100);letter-spacing:1.16px;color:#000;">0.000</span></span></div>
<div class="b" style="left:1008px;top:807px;width:60px;height:38px;"><span class="tw" style="width:35.5px;height:19.99px"><span class="t" style="font-size:19.99px;transform:scaleX(0.5560);letter-spacing:1px;">REF X</span></span></div>
<div class="b" style="left:621.75px;top:868.75px;width:58.25px;height:38.25px;"></div>
<div class="tx" style="left:632.8px;top:881.54px;"><span class="tw" style="width:20.4px;height:12.65px"><span class="t" style="font-size:12.65px;transform:scaleX(0.5417);letter-spacing:0.63px;color:#f2f2f2;">ZERO</span></span></div>
<div class="tx" style="left:655.2px;top:876.31px;"><span class="tw" style="width:9.2px;height:22.97px"><span class="t" style="font-size:22.97px;transform:scaleX(0.5587);letter-spacing:1.15px;color:#fff;">Y</span></span></div>
<div class="inp" style="left:688.75px;top:870.5px;width:98.75px;height:34px;padding-right:6.5px;"><span class="tw" style="width:45.45px;height:23.26px"><span class="t" style="font-size:23.26px;transform:scaleX(0.7100);letter-spacing:1.16px;color:#000;">0.550</span></span></div>
<div class="inp" style="left:794.5px;top:870.5px;width:98.75px;height:34px;padding-right:6.5px;"><span class="tw" style="width:45.45px;height:23.26px"><span class="t" style="font-size:23.26px;transform:scaleX(0.7100);letter-spacing:1.16px;color:#000;">0.550</span></span></div>
<div class="inp" style="left:900.75px;top:870.5px;width:98.75px;height:34px;padding-right:6.5px;"><span class="tw" style="width:45.45px;height:23.26px"><span class="t" style="font-size:23.26px;transform:scaleX(0.7100);letter-spacing:1.16px;color:#000;">0.000</span></span></div>
<div class="b" style="left:1008px;top:868.75px;width:60px;height:38.25px;"><span class="tw" style="width:35.5px;height:19.99px"><span class="t" style="font-size:19.99px;transform:scaleX(0.5591);letter-spacing:1px;">REF Y</span></span></div>
<div class="b" style="left:621.75px;top:931.25px;width:58.25px;height:37.5px;"></div>
<div class="tx" style="left:632.8px;top:944.04px;"><span class="tw" style="width:20.4px;height:12.65px"><span class="t" style="font-size:12.65px;transform:scaleX(0.5417);letter-spacing:0.63px;color:#f2f2f2;">ZERO</span></span></div>
<div class="tx" style="left:655.2px;top:938.81px;"><span class="tw" style="width:9.2px;height:22.97px"><span class="t" style="font-size:22.97px;transform:scaleX(0.6062);letter-spacing:1.15px;color:#fff;">Z</span></span></div>
<div class="inp" style="left:688.75px;top:932.5px;width:98.75px;height:34.5px;padding-right:6.5px;"><span class="tw" style="width:45.45px;height:23.26px"><span class="t" style="font-size:23.26px;transform:scaleX(0.7100);letter-spacing:1.16px;color:#000;">0.000</span></span></div>
<div class="inp" style="left:794.5px;top:932.5px;width:98.75px;height:34.5px;padding-right:6.5px;"><span class="tw" style="width:55.46px;height:23.26px"><span class="t" style="font-size:23.26px;transform:scaleX(0.7100);letter-spacing:1.16px;color:#000;">75.000</span></span></div>
<div class="inp" style="left:900.75px;top:932.5px;width:98.75px;height:34.5px;padding-right:6.5px;"><span class="tw" style="width:45.45px;height:23.26px"><span class="t" style="font-size:23.26px;transform:scaleX(0.7100);letter-spacing:1.16px;color:#000;">0.000</span></span></div>
<div class="b" style="left:1008px;top:931.25px;width:60px;height:37.5px;"><span class="tw" style="width:35.5px;height:19.99px"><span class="t" style="font-size:19.99px;transform:scaleX(0.5659);letter-spacing:1px;">REF Z</span></span></div>
<div class="b" style="left:621.75px;top:993.25px;width:58.25px;height:38px;"></div>
<div class="tx" style="left:632.8px;top:1006.04px;"><span class="tw" style="width:20.4px;height:12.65px"><span class="t" style="font-size:12.65px;transform:scaleX(0.5417);letter-spacing:0.63px;color:#f2f2f2;">ZERO</span></span></div>
<div class="tx" style="left:655.2px;top:1000.81px;"><span class="tw" style="width:9.2px;height:22.97px"><span class="t" style="font-size:22.97px;transform:scaleX(0.5188);letter-spacing:1.15px;color:#fff;">B</span></span></div>
<div class="inp" style="left:688.75px;top:994.5px;width:98.75px;height:34.25px;padding-right:6.5px;"><span class="tw" style="width:35.44px;height:23.26px"><span class="t" style="font-size:23.26px;transform:scaleX(0.7100);letter-spacing:1.16px;color:#000;">2.66</span></span></div>
<div class="inp" style="left:794.5px;top:994.5px;width:98.75px;height:34.25px;padding-right:6.5px;"><span class="tw" style="width:35.44px;height:23.26px"><span class="t" style="font-size:23.26px;transform:scaleX(0.7100);letter-spacing:1.16px;color:#000;">2.66</span></span></div>
<div class="inp" style="left:900.75px;top:994.5px;width:98.75px;height:34.25px;padding-right:6.5px;"><span class="tw" style="width:35.44px;height:23.26px"><span class="t" style="font-size:23.26px;transform:scaleX(0.7100);letter-spacing:1.16px;color:#000;">0.00</span></span></div>
<div class="b" style="left:1008px;top:993.25px;width:60px;height:38px;"><span class="tw" style="width:35.5px;height:19.99px"><span class="t" style="font-size:19.99px;transform:scaleX(0.5465);letter-spacing:1px;">REF B</span></span></div>
<div class="" style="left:1110px;top:738.75px;width:321.25px;height:30px;border:1.5px solid #a3a7a5;border-radius:3px;"></div>
<div class="tx" style="left:770.6px;top:744.94px;width:1000px;text-align:center;"><span class="tw" style="width:22px;height:19.26px"><span class="t" style="font-size:19.26px;transform:scaleX(0.6099);letter-spacing:0.96px;color:#f4f4f4;">0 %</span></span></div>
<div class="" style="left:1441.25px;top:733.75px;width:64.5px;height:40px;background:#595a5b;border:1.5px solid #b3b6b5;border-radius:5px;"></div>
<div class="tx" style="left:973.5px;top:737.18px;width:1000px;text-align:center;"><span class="tw" style="width:44.25px;height:17.15px"><span class="t" style="font-size:17.15px;transform:scaleX(0.5508);letter-spacing:0.86px;color:#f4f4f4;">SPINDLE</span></span></div>
<div class="tx" style="left:973.5px;top:756.88px;width:1000px;text-align:center;"><span class="tw" style="width:27.5px;height:17.15px"><span class="t" style="font-size:17.15px;transform:scaleX(0.5286);letter-spacing:0.86px;color:#f4f4f4;">LOAD</span></span></div>
<div class="" style="left:1110px;top:806.25px;width:215.75px;height:21.75px;background:linear-gradient(to bottom right,#cacaff 0%,#8c8cff 50%,#5656ff 100%);border-radius:2px 0 0 2px;"></div>
<div style="left:1323.75px;top:795px;width:40.75px;height:44.25px;border-radius:4px;background:#3c3c3e;overflow:hidden;"><div style="left:1.01px;top:0;width:1.6px;height:100%;background:#c8c8c8"></div><div style="left:9.36px;top:0;width:1.9px;height:100%;background:#e6e6e6"></div><div style="left:19.62px;top:0;width:1.9px;height:100%;background:#e6e6e6"></div><div style="left:29.88px;top:0;width:1.9px;height:100%;background:#e6e6e6"></div><div style="left:38.54px;top:0;width:1.6px;height:100%;background:#c8c8c8"></div></div>
<div class="" style="left:1376.25px;top:799.5px;width:54.25px;height:35px;background:#ebebeb;border-radius:5px;display:flex;align-items:center;justify-content:center;"><span class="tw" style="width:32px;height:18.17px"><span class="t" style="font-size:18.17px;transform:scaleX(0.7264);letter-spacing:0.91px;color:#000;">6000</span></span></div>
<div class="b" style="left:1442px;top:798px;width:63px;height:37.6px;"><span class="tw" style="width:46.2px;height:19.99px"><span class="t" style="font-size:19.99px;transform:scaleX(0.6079);letter-spacing:1px;">V 100%</span></span></div>
<div class="" style="left:1110px;top:874.25px;width:109.5px;height:21.5px;background:linear-gradient(to bottom right,#cacaff 0%,#8c8cff 50%,#5656ff 100%);border-radius:2px 0 0 2px;"></div>
<div class="" style="left:1256.75px;top:874.25px;width:108.75px;height:21.5px;background:#ebebeb;border-radius:0 3px 3px 0;"></div>
<div style="left:1217.5px;top:863px;width:41.25px;height:44.5px;border-radius:4px;background:#3c3c3e;overflow:hidden;"><div style="left:1.02px;top:0;width:1.6px;height:100%;background:#c8c8c8"></div><div style="left:9.47px;top:0;width:1.9px;height:100%;background:#e6e6e6"></div><div style="left:19.86px;top:0;width:1.9px;height:100%;background:#e6e6e6"></div><div style="left:30.25px;top:0;width:1.9px;height:100%;background:#e6e6e6"></div><div style="left:39.01px;top:0;width:1.6px;height:100%;background:#c8c8c8"></div></div>
<div class="" style="left:1376.25px;top:867.5px;width:54.25px;height:35px;background:#ebebeb;border-radius:5px;display:flex;align-items:center;justify-content:center;"><span class="tw" style="width:33.5px;height:18.17px"><span class="t" style="font-size:18.17px;transform:scaleX(0.6686);letter-spacing:0.91px;color:#000;">100%</span></span></div>
<div class="b" style="left:1442px;top:866px;width:63px;height:37.6px;"><span class="tw" style="width:46.2px;height:19.99px"><span class="t" style="font-size:19.99px;transform:scaleX(0.6171);letter-spacing:1px;">F 100%</span></span></div>
<div class="" style="left:1110px;top:942px;width:215.75px;height:21.75px;background:linear-gradient(to bottom right,#cacaff 0%,#8c8cff 50%,#5656ff 100%);border-radius:2px 0 0 2px;"></div>
<div style="left:1323.75px;top:930.75px;width:40.75px;height:44.25px;border-radius:4px;background:#3c3c3e;overflow:hidden;"><div style="left:1.01px;top:0;width:1.6px;height:100%;background:#c8c8c8"></div><div style="left:9.36px;top:0;width:1.9px;height:100%;background:#e6e6e6"></div><div style="left:19.62px;top:0;width:1.9px;height:100%;background:#e6e6e6"></div><div style="left:29.88px;top:0;width:1.9px;height:100%;background:#e6e6e6"></div><div style="left:38.54px;top:0;width:1.6px;height:100%;background:#c8c8c8"></div></div>
<div class="" style="left:1376.25px;top:935.5px;width:54.25px;height:35px;background:#ebebeb;border-radius:5px;display:flex;align-items:center;justify-content:center;"><span class="tw" style="width:33.5px;height:18.17px"><span class="t" style="font-size:18.17px;transform:scaleX(0.6686);letter-spacing:0.91px;color:#000;">100%</span></span></div>
<div class="b" style="left:1442px;top:934px;width:63px;height:37.7px;"><span class="tw" style="width:46.2px;height:19.99px"><span class="t" style="font-size:19.99px;transform:scaleX(0.6079);letter-spacing:1px;">S 100%</span></span></div>
<div class="" style="left:1110px;top:1010px;width:215.75px;height:21.75px;background:linear-gradient(to bottom right,#cacaff 0%,#8c8cff 50%,#5656ff 100%);border-radius:2px 0 0 2px;"></div>
<div style="left:1323.75px;top:998.75px;width:40.75px;height:44.25px;border-radius:4px;background:#3c3c3e;overflow:hidden;"><div style="left:1.01px;top:0;width:1.6px;height:100%;background:#c8c8c8"></div><div style="left:9.36px;top:0;width:1.9px;height:100%;background:#e6e6e6"></div><div style="left:19.62px;top:0;width:1.9px;height:100%;background:#e6e6e6"></div><div style="left:29.88px;top:0;width:1.9px;height:100%;background:#e6e6e6"></div><div style="left:38.54px;top:0;width:1.6px;height:100%;background:#c8c8c8"></div></div>
<div class="" style="left:1376.25px;top:1003.5px;width:54.25px;height:35px;background:#ebebeb;border-radius:5px;display:flex;align-items:center;justify-content:center;"><span class="tw" style="width:33.5px;height:18.17px"><span class="t" style="font-size:18.17px;transform:scaleX(0.6686);letter-spacing:0.91px;color:#000;">100%</span></span></div>
<div class="b" style="left:1442px;top:1002px;width:63px;height:37.7px;"><span class="tw" style="width:46.2px;height:19.99px"><span class="t" style="font-size:19.99px;transform:scaleX(0.5992);letter-spacing:1px;">R 100%</span></span></div>
<div class="bb" style="left:1548.75px;top:735px;width:49.25px;height:40px;"><span class="tw" style="width:25.77px;height:20.35px"><span class="t" style="font-size:20.35px;transform:scaleX(0.5600);letter-spacing:1.02px;">JOG</span></span></div>
<div class="b" style="left:1605.5px;top:735px;width:50.75px;height:40px;"><span class="tw" style="width:31.76px;height:20.35px"><span class="t" style="font-size:20.35px;transform:scaleX(0.6579);letter-spacing:1.02px;">5MM</span></span></div>
<div class="b" style="left:1663.75px;top:735px;width:49.25px;height:40px;"><span class="tw" style="width:31.76px;height:20.35px"><span class="t" style="font-size:20.35px;transform:scaleX(0.6579);letter-spacing:1.02px;">1MM</span></span></div>
<div class="b" style="left:1720.75px;top:735px;width:50px;height:40px;"><span class="tw" style="width:36.49px;height:20.35px"><span class="t" style="font-size:20.35px;transform:scaleX(0.6642);letter-spacing:1.02px;">.5MM</span></span></div>
<div class="b" style="left:1778.25px;top:735px;width:50px;height:40px;"><span class="tw" style="width:36.49px;height:20.35px"><span class="t" style="font-size:20.35px;transform:scaleX(0.6642);letter-spacing:1.02px;">.1MM</span></span></div>
<div class="b" style="left:1835.75px;top:735px;width:50.5px;height:40px;"><span class="tw" style="width:43.25px;height:20.35px"><span class="t" style="font-size:20.35px;transform:scaleX(0.6429);letter-spacing:1.02px;">.01MM</span></span></div>
<div class="" style="left:1548.2px;top:808.25px;width:235.3px;height:21.45px;background:linear-gradient(to bottom right,#cacaff 0%,#8c8cff 50%,#5656ff 100%);border-radius:2px 0 0 2px;"></div>
<div style="left:1781.5px;top:796.7px;width:41.9px;height:44.3px;border-radius:4px;background:#3c3c3e;overflow:hidden;"><div style="left:1.03px;top:0;width:1.6px;height:100%;background:#c8c8c8"></div><div style="left:9.62px;top:0;width:1.9px;height:100%;background:#e6e6e6"></div><div style="left:20.17px;top:0;width:1.9px;height:100%;background:#e6e6e6"></div><div style="left:30.73px;top:0;width:1.9px;height:100%;background:#e6e6e6"></div><div style="left:39.62px;top:0;width:1.6px;height:100%;background:#c8c8c8"></div></div>
<div class="" style="left:1839.5px;top:800.7px;width:46.9px;height:37.1px;background:#ebebeb;border-radius:5px;display:flex;align-items:center;justify-content:center;"><span class="tw" style="width:33.5px;height:18.17px"><span class="t" style="font-size:18.17px;transform:scaleX(0.6686);letter-spacing:0.91px;color:#000;">100%</span></span></div>
<div class="" style="left:1548.2px;top:862px;width:104.7px;height:37.5px;background:#555859;border-radius:5px;display:flex;align-items:center;justify-content:flex-end;padding-right:6px;"><span class="tw" style="width:25.43px;height:23.26px"><span class="t" style="font-size:23.26px;transform:scaleX(0.7100);letter-spacing:1.16px;color:#f4f4f4;">0.0</span></span></div>
<div class="tx" style="left:1216.9px;top:869.51px;width:1000px;text-align:center;"><span class="tw" style="width:124px;height:23.26px"><span class="t" style="font-size:23.26px;transform:scaleX(0.5912);letter-spacing:1.16px;color:#f4f4f4;">FEEDRATE MM/M</span></span></div>
<div class="inp" style="left:1782.3px;top:862px;width:104.1px;height:37.5px;padding-right:6px;"><span class="tw" style="width:25.43px;height:23.26px"><span class="t" style="font-size:23.26px;transform:scaleX(0.7100);letter-spacing:1.16px;color:#000;">0.0</span></span></div>
<div class="" style="left:1548px;top:918px;width:338.4px;height:2px;background:#b8bcb9;"></div>
<div class="" style="left:1548.2px;top:938.2px;width:104.7px;height:37.6px;background:#555859;border-radius:5px;display:flex;align-items:center;justify-content:flex-end;padding-right:6px;"><span class="tw" style="width:10.01px;height:23.26px"><span class="t" style="font-size:23.26px;transform:scaleX(0.7100);letter-spacing:1.16px;color:#f4f4f4;">0</span></span></div>
<div class="tx" style="left:1217px;top:945.91px;width:1000px;text-align:center;"><span class="tw" style="width:96.7px;height:23.26px"><span class="t" style="font-size:23.26px;transform:scaleX(0.5631);letter-spacing:1.16px;color:#f4f4f4;">SPINDLE RPM</span></span></div>
<div class="inp" style="left:1782.3px;top:938.2px;width:104.1px;height:37.6px;padding-right:6px;"><span class="tw" style="width:10.01px;height:23.26px"><span class="t" style="font-size:23.26px;transform:scaleX(0.7100);letter-spacing:1.16px;color:#000;">0</span></span></div>
<div class="b" style="left:1548.7px;top:999.3px;width:98.6px;height:41px;"></div>
<svg width="22" height="26" viewBox="0 0 22 26" style="position:absolute;left:1570px;top:1006px"><path d="M11.3 8.2 A6.4 6.4 0 1 1 6.3 18.6" fill="none" stroke="#fff" stroke-width="2.4"/><path d="M5.4 4.4 L4.1 11 L10.6 10.4 Z" fill="#fff"/></svg>
<div class="tx" style="left:1594px;top:1008.56px;"><span class="tw" style="width:26.4px;height:22.97px"><span class="t" style="font-size:22.97px;transform:scaleX(0.5211);letter-spacing:1.15px;color:#fff;">REV</span></span></div>
<div class="b" style="left:1668.7px;top:999.3px;width:98.3px;height:41px;"><span class="tw" style="width:35.4px;height:22.97px"><span class="t" style="font-size:22.97px;transform:scaleX(0.5307);letter-spacing:1.15px;">STOP</span></span></div>
<div class="b" style="left:1788.7px;top:999.3px;width:98.6px;height:41px;"></div>
<svg width="22" height="26" viewBox="0 0 22 26" style="position:absolute;left:1845.6px;top:1006px"><g transform="translate(22.6,0) scale(-1,1)"><path d="M11.3 8.2 A6.4 6.4 0 1 1 6.3 18.6" fill="none" stroke="#fff" stroke-width="2.4"/><path d="M5.4 4.4 L4.1 11 L10.6 10.4 Z" fill="#fff"/></g></svg>
<div class="tx" style="left:1813.9px;top:1008.56px;"><span class="tw" style="width:30.1px;height:22.97px"><span class="t" style="font-size:22.97px;transform:scaleX(0.5401);letter-spacing:1.15px;color:#fff;">FWD</span></span></div>
</body></html>
